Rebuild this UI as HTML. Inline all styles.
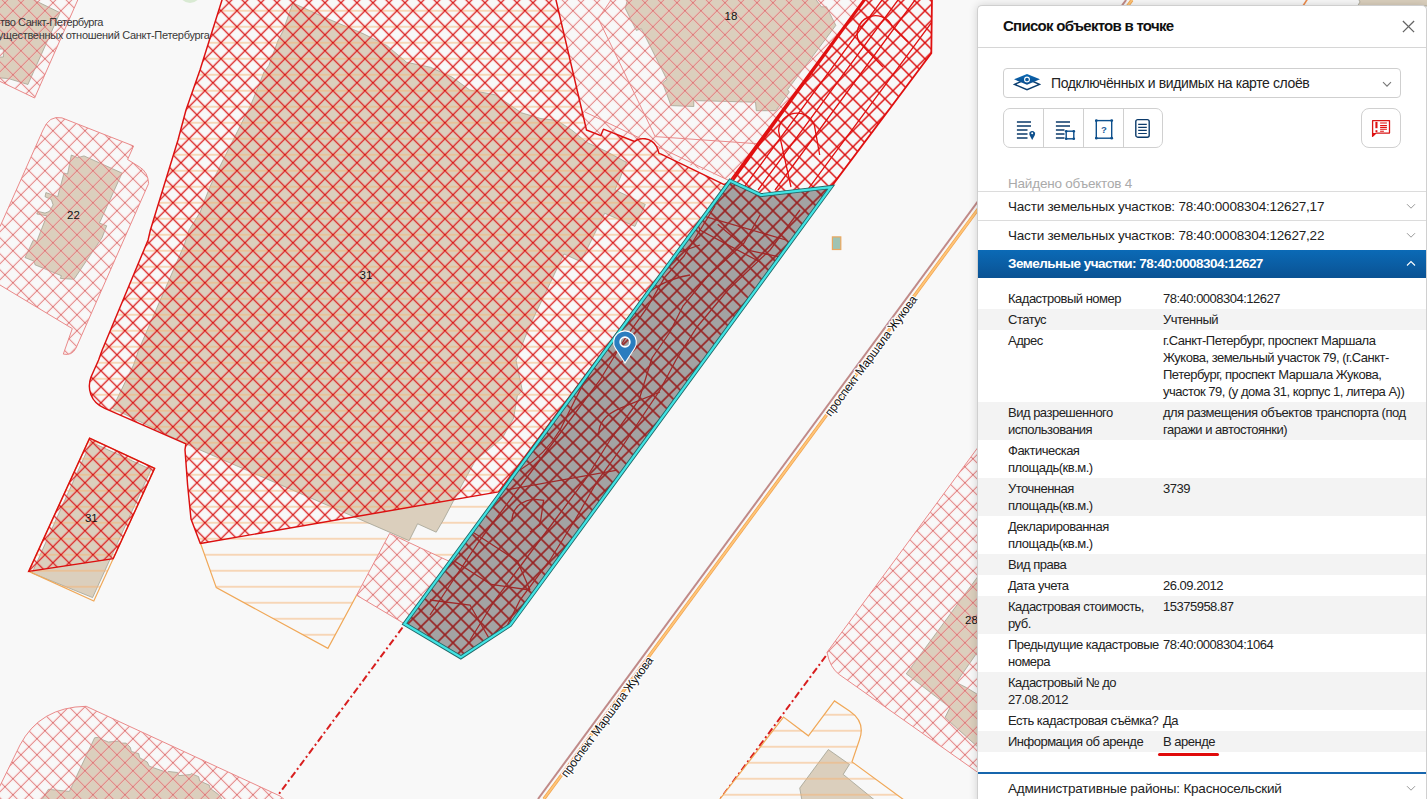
<!DOCTYPE html>
<html><head><meta charset="utf-8">
<style>
*{margin:0;padding:0;box-sizing:border-box}
html,body{width:1427px;height:799px;overflow:hidden;background:#f8f8f8;font-family:"Liberation Sans",sans-serif}
#map{position:absolute;left:0;top:0;width:1427px;height:799px}
#panel{position:absolute;left:977px;top:5px;width:450px;height:800px;background:#fff;border:1px solid #cfcfcf;border-right:1px solid #d0d0d0;border-radius:5px 5px 0 0;box-shadow:0 0 9px rgba(0,0,0,0.16);overflow:hidden;color:#222}
.abs{position:absolute;white-space:nowrap}
.row{position:relative;width:450px;font-size:13px;letter-spacing:-0.5px;line-height:17px;color:#222}
.lab{position:absolute;left:30px;top:2px}
.val{position:absolute;left:185px;top:2px}
</style></head><body>
<svg id="map" width="1427" height="799" viewBox="0 0 1427 799">
<defs>
<pattern id="hr" patternUnits="userSpaceOnUse" x="4.95" y="2.75" width="16" height="16">
<path d="M-8,-8L24,24M8,-8L24,8M-8,8L8,24M24,-8L-8,24M8,-8L-8,8M24,8L8,24" stroke="#ff8a8a" stroke-opacity="0.35" stroke-width="2.5" fill="none"/><path d="M-8,-8L24,24M8,-8L24,8M-8,8L8,24M24,-8L-8,24M8,-8L-8,8M24,8L8,24" stroke="#d41515" stroke-width="1.05" fill="none"/>
</pattern>
<pattern id="hp" patternUnits="userSpaceOnUse" x="4.95" y="2.75" width="16" height="16">
<path d="M-8,-8L24,24M8,-8L24,8M-8,8L8,24M24,-8L-8,24M8,-8L-8,8M24,8L8,24" stroke="#ffb0b0" stroke-opacity="0.3" stroke-width="2.4" fill="none"/><path d="M-8,-8L24,24M8,-8L24,8M-8,8L8,24M24,-8L-8,24M8,-8L-8,8M24,8L8,24" stroke="#dc7a7a" stroke-width="1" fill="none"/>
</pattern>
<pattern id="hn" patternUnits="userSpaceOnUse" x="4.95" y="2.75" width="16" height="16">
<path d="M-8,-8L24,24M8,-8L24,8M-8,8L8,24M24,-8L-8,24M8,-8L-8,8M24,8L8,24" stroke="#dc0e0e" stroke-width="1.45" fill="none"/>
</pattern>
<pattern id="hd" patternUnits="userSpaceOnUse" x="4.95" y="2.75" width="16" height="16">
<path d="M-8,-8L24,24M8,-8L24,8M-8,8L8,24M24,-8L-8,24M8,-8L-8,8M24,8L8,24" stroke="#982222" stroke-width="1.6" fill="none"/>
</pattern>
<pattern id="ho" patternUnits="userSpaceOnUse" x="0" y="0" width="16" height="16">
<rect x="0" y="9.8" width="16" height="1.9" fill="#f6b474" fill-opacity="0.5"/>
</pattern>
</defs>
<rect width="1427" height="799" fill="#f8f8f8"/>
<!-- green circle top -->
<circle cx="190" cy="-8" r="11" fill="#d9ead3"/>

<!-- roads -->
<line x1="538" y1="799" x2="1126.1" y2="0" stroke="#c08a88" stroke-width="2"/>
<line x1="543.9" y1="799" x2="1132" y2="0" stroke="#f0a24e" stroke-width="3.2"/><line x1="543.9" y1="799" x2="1132" y2="0" stroke="#ffc577" stroke-width="1.8"/>
<!-- dash-dot -->
<path d="M402.5,627.5L274.5,800M825.8,656L719.5,800" stroke="#d81e1e" stroke-width="2" stroke-dasharray="7,3,2,3" fill="none"/>

<!-- TOP-LEFT pink parcel -->
<path id="tl" d="M-5,-4L79.5,-4L34.6,98L-5,79Z" fill="#f8f8f8"/>
<path d="M28,-3L60,12.7L27.9,84.5L8.5,78.6L-3,77.7L-3,57L3.4,57L3.4,49L-3,49L-3,-3Z" fill="#dbcfbd" stroke="#9a9a8a" stroke-width="0.7"/>
<path d="M-5,-4L79.5,-4L34.6,98L-5,79Z" fill="url(#hp)" stroke="#ea8a8a" stroke-width="1"/>

<!-- Parcel 22 -->
<path d="M0,226.6L43,130Q49,115 62,117.9L133.6,146L127.6,159.5L139.6,167Q148,172 148.6,183.5L76,348.1Q72,356 63.3,354.1L72.3,328.6L40,309.1L0,285Z" fill="#f8f8f8"/>
<path d="M71.3,155L77.6,157.7L84,155.9L122.1,173.1L99.4,223.1L106.7,225.8L102.1,237.6L74,279.3L60.4,278.4L61.3,275.7L35,264.8L34.1,261.2L25,257.6L33.2,240.3L36.8,241.2L46.8,215.8L36.8,214L37.7,211.3L45,213.1L49.5,211.3L53.1,204.9L51.3,199.5L45,196.7L45.9,192.6L57.7,196.7L64,173.1L67.6,174Z" fill="#dbcfbd" stroke="#9a9a8a" stroke-width="0.7"/>
<path d="M0,226.6L43,130Q49,115 62,117.9L133.6,146L127.6,159.5L139.6,167Q148,172 148.6,183.5L76,348.1Q72,356 63.3,354.1L72.3,328.6L40,309.1L-5,282L-5,226Z" fill="url(#hp)" stroke="#ea8a8a" stroke-width="1"/>

<!-- Bottom-left pink parcel -->
<path d="M-5,806L-5,796L20,745Q40,707 86.2,706.3L280,796L292,806Z" fill="#f8f8f8"/>
<path d="M94.6,737.8L98.8,737.2L103,739.9L108.3,742L119.8,741L120.9,743.1L126.1,743.1L130.3,747.3L131.4,751.5L138.7,753.6L139.8,757.8L147.2,762L149.3,766.2L167.1,772.5L168.2,771.4L177.6,772.5L178.7,775.6L190.2,774.6L191.3,773.5L198.7,776.7L199.7,780.9L209.2,785.1L210.2,788.3L218.6,794.6L222,799L225,806L38,806L48.4,789.3L69.4,791.4Z" fill="#dbcfbd" stroke="#9a9a8a" stroke-width="0.7"/>
<path d="M-5,806L-5,796L20,745Q40,707 86.2,706.3L280,796L292,806Z" fill="url(#hp)" stroke="#ea8a8a" stroke-width="1"/>

<!-- Parcel 28 right -->
<path d="M990,431L827,652.3Q830,668 839.5,674.7L990,781Z" fill="#f8f8f8"/>
<path d="M990,560L906.3,673.8L950,707.5L945,717.5L990,758L990,702L966.3,687.5L956.3,682.5L990,634Z" fill="#dbcfbd" stroke="#9a9a8a" stroke-width="0.7"/>
<path d="M990,431L827,652.3Q830,668 839.5,674.7L990,781Z" fill="url(#hp)" stroke="#ea8a8a" stroke-width="1"/>

<!-- Orange parcel bottom right -->
<path d="M713,808L783.5,717.1L808.4,735.8L834.5,700.9L849.5,710.9Q866,722 859.4,740L852,761.9L915,808Z" fill="#f8f8f8"/>
<path d="M828.3,749.5L849.5,764.4L843.2,774.4L882,806L803,806L799.7,788.1Z" fill="#dbcfbd" stroke="#9a9a8a" stroke-width="0.7"/>
<path d="M713,808L783.5,717.1L808.4,735.8L834.5,700.9L849.5,710.9Q866,722 859.4,740L852,761.9L915,808Z" fill="url(#ho)" stroke="#f0a858" stroke-width="1.2"/>

<!-- P18 pink zone -->
<path d="M555,-4L556,0L586.5,130L600.8,135.6L603.4,129.2L634.6,141.5C639,137.5 651,136.5 656.8,147L659.1,153.4L661.2,154.1L730.1,180.8L863.6,0L866.5,-4L555,-4Z" fill="#f8f8f8"/>
<path d="M628,-3L625.3,8.5L636.3,30.4L641.4,28.7L666.8,79.4L662.5,82.8L671,105.6L693.8,106.5L693.8,100.6L755.5,102.2L756.3,110.7L775.8,110.7L789.3,92.1L787.6,89.6L835.8,25.4L826.5,6.8L821.4,6.8L814,-3Z" fill="#dbcfbd" stroke="#9a9a8a" stroke-width="0.7"/>
<path d="M555,-4L556,0L586.5,130L600.8,135.6L603.4,129.2L634.6,141.5C639,137.5 651,136.5 656.8,147L659.1,153.4L661.2,154.1L730.1,180.8L863.6,0L866.5,-4L555,-4Z" fill="url(#hp)"/>
<path d="M611,0L598.3,18.6L655.2,136.6L756.8,143.7M585,112L732,182" stroke="#ea8a8a" stroke-width="1" fill="none"/>

<!-- Pink P2 -->
<path d="M389.6,533.5L470,571L404.5,623.8L356.6,595.2Z" fill="#f8f8f8"/>

<!-- Orange O1 -->
<path d="M200.3,542.8L216.3,587.6L327.9,648.4L356.6,595.2L389.6,533.5L470,571L498.5,491.9Z" fill="url(#ho)"/>
<path d="M200.3,542.8L216.3,587.6L327.9,648.4L356.6,595.2" stroke="#f0a858" stroke-width="1.2" fill="none"/>

<!-- R1 big red zone -->
<path id="r1" d="M223,-4L222,0L200,70L186,110L178,140L150.4,230L148.1,240L102.2,350L98.6,360L91,377C87,388 90,402 104.8,408.3L185.9,443.8L185,449.7L187.6,485L191,519L200.3,543.5L498.5,491.9L730.1,180.8L724.2,184.6L661.2,154.1L659.1,153.4L656.8,147C651,136.5 639,137.5 634.6,141.5L603.4,129.2L600.8,135.6L586.5,130L556,0L555,-4Z" fill="#f8f8f8"/>
<!-- big beige building -->
<path d="M292.9,3L325.5,17.8L363,33.6L386.8,45.5L406.6,62.3L430.3,67.2L452,77.1L469.8,90L495.5,94.9L521.2,112.7L541,118.6L557,120.4L571.7,130L586.8,142.4L606.1,151.3L626.7,162.4L615,189.9L645.3,204.4L635,226.4L604.7,213.3L580.8,261.7L564,254L532.5,320L524.9,337.7L516.1,360.5L522.4,390.8L517.3,395.8L513.6,418.3L502.6,437.5L475.1,461L460,488.5L443.4,520L436.2,532.2L417.6,523.8L409.1,540.7L187,444.3L112.4,408.3L133.5,365L138.6,350L184.2,245L189,230L200,212.5L204.7,200L211,184.4L223.4,159.4L237.5,131.3L251.6,103L264,72L268.8,65.6L278,40.6L282.8,31.3Z" fill="#dbcfbd" stroke="#9a9a8a" stroke-width="0.7"/>
<!-- small parcel 31 -->
<path d="M89.6,438.2L154.6,468.3L93.8,601L28.7,571.4Z" fill="#f8f8f8"/>
<path d="M91,442L151,469.5L92.6,597.6L32,573Z" fill="#dbcfbd" stroke="#9a9a8a" stroke-width="0.7"/>
<path d="M89.6,438.2L154.6,468.3L93.8,601L28.7,571.4Z" fill="url(#ho)" stroke="#f0a858" stroke-width="1.2"/>
<path d="M89.6,438.2L154.6,468.3L113.2,558.7L28.7,571.4Z" fill="url(#hr)" stroke="#dc1010" stroke-width="1.45"/>
<!-- pink P2 hatch (on top of orange) -->
<path d="M389.6,533.5L470,571L404.5,623.8L356.6,595.2Z" fill="url(#hp)" stroke="#ea8a8a" stroke-width="1"/>
<!-- orange stripes over R1 + red hatch -->
<path d="M223,-4L222,0L200,70L186,110L178,140L150.4,230L148.1,240L102.2,350L98.6,360L91,377C87,388 90,402 104.8,408.3L185.9,443.8L185,449.7L187.6,485L191,519L200.3,543.5L498.5,491.9L730.1,180.8L724.2,184.6L661.2,154.1L659.1,153.4L656.8,147C651,136.5 639,137.5 634.6,141.5L603.4,129.2L600.8,135.6L586.5,130L556,0L555,-4Z" fill="url(#ho)"/>
<path d="M223,-4L222,0L200,70L186,110L178,140L150.4,230L148.1,240L102.2,350L98.6,360L91,377C87,388 90,402 104.8,408.3L185.9,443.8L185,449.7L187.6,485L191,519L200.3,543.5L498.5,491.9L730.1,180.8L724.2,184.6L661.2,154.1L659.1,153.4L656.8,147C651,136.5 639,137.5 634.6,141.5L603.4,129.2L600.8,135.6L586.5,130L556,0L555,-4Z" fill="url(#hr)" stroke="#dc1010" stroke-width="1.45" stroke-linejoin="round"/>

<!-- NE strip -->
<path d="M866.5,-4L932,-4L931.3,53.2L831,187.1L760.9,195.1L730.1,180.8Z" fill="#f8f8f8"/>
<path d="M866.5,-4L932,-4L931.3,53.2L831,187.1L760.9,195.1L730.1,180.8Z" fill="url(#hn)" stroke="#e01010" stroke-width="1.8"/>
<clipPath id="cne"><path d="M866.5,-4L932,-4L931.3,53.2L831,187.1L760.9,195.1L730.1,180.8Z"/></clipPath>
<g clip-path="url(#cne)" stroke="#e01010" fill="none">
<path d="M882,0L742,190M898,0L758,190M915,0L775,190M932,22L800,200" stroke-width="1.3"/>
<path d="M866,-2L733,180" stroke-width="2.6"/>
<path d="M859,42A18,18 0 1 1 892,26L908,42M859,42L883,67" stroke-width="1.4"/>
<path d="M778.6,131A18.5,18.5 0 0 1 814.3,124.8L819.7,155M778.6,131L791,187" stroke-width="1.3"/>
</g>
<!-- small rect -->
<rect x="832.4" y="236.9" width="8.4" height="12.6" fill="#9fc3b3" stroke="#eaa860" stroke-width="1.2"/>

<!-- Teal strip -->
<path id="ts" d="M730.1,180.8L760.9,195.1L831,187.1L510.1,625.1L460.8,657.3L404.5,623.8Z" fill="#a3a3a3"/>
<path d="M730.1,180.8L760.9,195.1L831,187.1L510.1,625.1L460.8,657.3L404.5,623.8Z" fill="url(#hd)"/>
<clipPath id="cts"><path d="M730.1,180.8L760.9,195.1L831,187.1L510.1,625.1L460.8,657.3L404.5,623.8Z"/></clipPath>
<g clip-path="url(#cts)" stroke="#a02828" stroke-width="1.3" fill="none">
<path d="M704.6,216.3L786,240M717.7,224.2L749,250.5L786,258.3M690,205L700,230L760,262"/>
<path d="M715,206L684,256L665,277L647,308L626,337L600,380L570,420L540,460L510,500L480,540L450,585L430,615"/>
<path d="M760,215L744,243L707,277L683,306L670,332L652,358L639,400L610,440L585,480L555,520L525,560L495,600L470,640"/>
<path d="M800,210L770,250L728,290L697,327L676,360L660,390L640,420L620,450L598,480L575,520L550,560L520,600L500,640"/>
<path d="M506.8,489.9L617.2,470.2M598.8,434.7Q598,418 619.8,408.4L660,392"/>
<path d="M512,521.4Q512,503 533,499.1L543.6,500.4L540,525L530,532M472.6,532L517.3,560.9L530,590M454.2,560.9L491,584.5L530,590"/>
<path d="M520,470Q545,455 560,430L575,400Q590,370 600,360M560,300Q600,320 610,330L640,300Q660,280 690,275"/>
<path d="M430,600L470,605L490,640M440,575L455,545L470,520M610,250L650,262L700,245"/>
</g>
<path d="M730.1,180.8L760.9,195.1L831,187.1L510.1,625.1L460.8,657.3L404.5,623.8Z" fill="none" stroke="#226a6a" stroke-width="4" stroke-linejoin="miter"/>
<path d="M730.1,180.8L760.9,195.1L831,187.1L510.1,625.1L460.8,657.3L404.5,623.8Z" fill="none" stroke="#42e4e4" stroke-width="2.2" stroke-linejoin="miter"/>

<!-- Labels -->
<g font-family="Liberation Sans" font-size="11.5" fill="#111">
<text x="731" y="19.5" text-anchor="middle">18</text>
<text x="73.5" y="219" text-anchor="middle">22</text>
<text x="366" y="279" text-anchor="middle">31</text>
<text x="91.3" y="521.5" text-anchor="middle">31</text>
<text x="971.5" y="624" text-anchor="middle">28</text>
</g>
<g font-family="Liberation Sans" font-size="11" fill="#383838">
<text x="103" y="26.2" text-anchor="end" letter-spacing="-0.45">тво Санкт-Петербурга</text>
<text x="209.6" y="39.2" text-anchor="end" letter-spacing="-0.3">ущественных отношений Санкт-Петербурга</text>
</g>
<g font-family="Liberation Sans" font-size="12" letter-spacing="-0.25" fill="#111" stroke="#fff" stroke-width="2.2" paint-order="stroke" stroke-linejoin="round">
<text transform="translate(607,717) rotate(-53.6)" text-anchor="middle" dy="4">проспект Маршала Жукова</text>
<text transform="translate(871,356) rotate(-53.6)" text-anchor="middle" dy="4">проспект Маршала Жукова</text>
</g>

<!-- pin -->
<g>

<path d="M625,364L615.1,348.8A11.9,11.9 0 1 1 634.9,348.8ZM625,346.2A4.2,4.2 0 1 0 625,337.8A4.2,4.2 0 1 0 625,346.2Z" fill="#fff" fill-rule="evenodd"/>
<path d="M625,361.9L615.9,348A10.8,10.8 0 1 1 634.1,348ZM625,346.2A4.2,4.2 0 1 0 625,337.8A4.2,4.2 0 1 0 625,346.2Z" fill="#2a7dbf" fill-rule="evenodd"/>
<circle cx="625" cy="342" r="4.9" fill="none" stroke="#fff" stroke-width="1.6"/>
</g>
<!-- top-right bits above panel -->
<path d="M1358,-2L1360,2L1357.5,6L1430,6L1430,-2Z" fill="#dacfbd" stroke="#9a9a8a" stroke-width="0.7"/>
<path d="M1307.5,-1L1303,6" stroke="#ec8a4a" stroke-width="1.6"/>
</svg>

<div id="panel">
<div class="abs" style="left:25px;top:11px;font-size:15px;font-weight:bold;letter-spacing:-0.72px;color:#111">Список объектов в точке</div>
<svg class="abs" style="left:424px;top:14px" width="13" height="13" viewBox="0 0 13 13"><path d="M0.9,1L12.1,12.1M12.1,1L0.9,12.1" stroke="#666" stroke-width="1.3"/></svg>
<div class="abs" style="left:0;top:41px;width:450px;height:1px;background:#d6d6d6"></div>
<div class="abs" style="left:25px;top:62px;width:398px;height:30px;border:1px solid #cfcfcf;border-radius:4px"></div>
<svg class="abs" style="left:35px;top:67px" width="28" height="18" viewBox="1013 73 28 18">
<defs><linearGradient id="lg" x1="0" y1="0" x2="0" y2="1"><stop offset="0" stop-color="#0b6ab5"/><stop offset="1" stop-color="#0a4a8a"/></linearGradient></defs>
<path d="M1014.6,84.4L1027,78.9L1039.4,84.4L1027,89.6Z" fill="none" stroke="#0b3d6e" stroke-width="1.5" stroke-linejoin="miter"/>
<path d="M1014,79.3L1027,73.9L1040,79.3L1027,84.8Z" fill="url(#lg)"/>
<circle cx="1027" cy="79.5" r="2.4" fill="#0b5a9e" stroke="#fff" stroke-width="1.1"/>
</svg>
<div class="abs" style="left:73px;top:69px;font-size:14px;letter-spacing:-0.39px;color:#222">Подключённых и видимых на карте слоёв</div>
<svg class="abs" style="left:404px;top:75px" width="10" height="7" viewBox="0 0 10 7"><path d="M1,1.2L5,5.2L9,1.2" stroke="#777" stroke-width="1.1" fill="none"/></svg>
<div class="abs" style="left:25px;top:102px;width:160px;height:40px;border:1px solid #d0d0d0;border-radius:7px"></div>
<div class="abs" style="left:65px;top:103px;width:1px;height:38px;background:#d0d0d0"></div>
<div class="abs" style="left:105px;top:103px;width:1px;height:38px;background:#d0d0d0"></div>
<div class="abs" style="left:145px;top:103px;width:1px;height:38px;background:#d0d0d0"></div>
<svg class="abs" style="left:38px;top:115px" width="22" height="22" viewBox="0 0 22 22">
<path d="M0.9,1H15M0.9,5H15M0.9,9H11.5M0.9,13H11.5M0.9,17H11.5" stroke="#0b3a6a" stroke-width="1.6"/>
<path d="M16.2,19L13.5,14A2.9,2.9 0 1 1 18.9,14Z" fill="#0d4f8c"/><circle cx="16.2" cy="12.3" r="1" fill="#fff"/>
</svg>
<svg class="abs" style="left:77px;top:115px" width="22" height="22" viewBox="0 0 22 22">
<path d="M0.9,1H15M0.9,5H15M0.9,9H9.5M0.9,13H9.5M0.9,17H9.5" stroke="#0b3a6a" stroke-width="1.6"/>
<rect x="11.2" y="10.2" width="7.6" height="7.6" fill="none" stroke="#0d4f8c" stroke-width="1.4"/>
<circle cx="11.2" cy="10.2" r="1.3" fill="#0d4f8c"/><circle cx="18.8" cy="10.2" r="1.3" fill="#0d4f8c"/><circle cx="11.2" cy="17.8" r="1.3" fill="#0d4f8c"/><circle cx="18.8" cy="17.8" r="1.3" fill="#0d4f8c"/>
</svg>
<svg class="abs" style="left:117px;top:113px" width="22" height="22" viewBox="0 0 22 22">
<rect x="1.3" y="1.6" width="15.4" height="17.6" fill="none" stroke="#0d4f8c" stroke-width="1.4"/>
<circle cx="1.3" cy="1.6" r="1.4" fill="#0d4f8c"/><circle cx="16.7" cy="1.6" r="1.4" fill="#0d4f8c"/><circle cx="1.3" cy="19.2" r="1.4" fill="#0d4f8c"/><circle cx="16.7" cy="19.2" r="1.4" fill="#0d4f8c"/>
<text x="9" y="14" font-family="Liberation Sans" font-size="9.5" font-weight="bold" fill="#1a5a9a" text-anchor="middle">?</text>
</svg>
<svg class="abs" style="left:157px;top:112px" width="22" height="22" viewBox="0 0 22 22">
<rect x="0.8" y="1.6" width="13.4" height="17.6" rx="2" fill="none" stroke="#0b3a6a" stroke-width="1.4"/>
<path d="M3.2,6.4H11.8M3.2,9.4H11.8M3.2,12.4H11.8M3.2,15.5H11.8" stroke="#0b3a6a" stroke-width="1.1"/>
</svg>
<div class="abs" style="left:383px;top:102px;width:40px;height:40px;border:1px solid #d0d0d0;border-radius:8px"></div>
<svg class="abs" style="left:393px;top:113px" width="22" height="22" viewBox="1371 119 22 22">
<path d="M1372.6,120.6H1389.5V133.1H1376L1372.6,136.4Z" fill="none" stroke="#d81616" stroke-width="1.3" stroke-linejoin="round"/>
<path d="M1372.2,133L1372.2,136.6L1376,133Z" fill="#e01010"/>
<rect x="1375.4" y="121.9" width="2.1" height="6.3" fill="#e01010"/><rect x="1375.5" y="130.2" width="1.9" height="1.9" fill="#e01010"/>
<path d="M1380.1,123H1386.9M1380.1,125.5H1386.9M1380.1,127.4H1386.9M1380.1,129.3H1386.9M1380.1,131.2H1383.9" stroke="#e01010" stroke-width="1.1"/>
</svg>
<div class="abs" style="left:30px;top:170px;font-size:13.5px;letter-spacing:-0.2px;color:#aaa">Найдено объектов 4</div>
<div class="abs" style="left:0;top:185px;width:450px;height:1px;background:#dcdcdc"></div>
<div class="abs" style="left:30px;top:193px;font-size:13.5px;letter-spacing:-0.2px;color:#222">Части земельных участков: 78:40:0008304:12627,17</div>
<svg class="abs" style="left:428px;top:197px" width="10" height="7" viewBox="0 0 10 7"><path d="M1,1.2L5,5.2L9,1.2" stroke="#999" stroke-width="1" fill="none"/></svg>
<div class="abs" style="left:0;top:214px;width:450px;height:1px;background:#dcdcdc"></div>
<div class="abs" style="left:30px;top:222px;font-size:13.5px;letter-spacing:-0.2px;color:#222">Части земельных участков: 78:40:0008304:12627,22</div>
<svg class="abs" style="left:428px;top:226px" width="10" height="7" viewBox="0 0 10 7"><path d="M1,1.2L5,5.2L9,1.2" stroke="#999" stroke-width="1" fill="none"/></svg>
<div class="abs" style="left:0;top:244px;width:450px;height:28px;background:linear-gradient(#0b6ab6,#0a5293)"></div>
<div class="abs" style="left:30px;top:250px;font-size:13.5px;font-weight:bold;letter-spacing:-0.53px;color:#fff">Земельные участки: 78:40:0008304:12627</div>
<svg class="abs" style="left:428px;top:254px" width="10" height="7" viewBox="0 0 10 7"><path d="M1,5.5L5,1.5L9,5.5" stroke="#fff" stroke-width="1.1" fill="none"/></svg>
<div id="tbl" class="abs" style="left:0;top:282px;width:450px"><div class="row" style="height:21px;background:#fff"><div class="lab">Кадастровый номер</div><div class="val">78:40:0008304:12627</div></div><div class="row" style="height:21px;background:#f3f3f3"><div class="lab">Статус</div><div class="val">Учтенный</div></div><div class="row" style="height:72px;background:#fff"><div class="lab">Адрес</div><div class="val">г.Санкт-Петербург, проспект Маршала<br>Жукова, земельный участок 79, (г.Санкт-<br>Петербург, проспект Маршала Жукова,<br>участок 79, (у дома 31, корпус 1, литера А))</div></div><div class="row" style="height:38px;background:#f3f3f3"><div class="lab">Вид разрешенного<br>использования</div><div class="val">для размещения объектов транспорта (под<br>гаражи и автостоянки)</div></div><div class="row" style="height:38px;background:#fff"><div class="lab">Фактическая<br>площадь(кв.м.)</div><div class="val"></div></div><div class="row" style="height:38px;background:#f3f3f3"><div class="lab">Уточненная<br>площадь(кв.м.)</div><div class="val">3739</div></div><div class="row" style="height:38px;background:#fff"><div class="lab">Декларированная<br>площадь(кв.м.)</div><div class="val"></div></div><div class="row" style="height:21px;background:#f3f3f3"><div class="lab">Вид права</div><div class="val"></div></div><div class="row" style="height:21px;background:#fff"><div class="lab">Дата учета</div><div class="val">26.09.2012</div></div><div class="row" style="height:38px;background:#f3f3f3"><div class="lab">Кадастровая стоимость,<br>руб.</div><div class="val">15375958.87</div></div><div class="row" style="height:38px;background:#fff"><div class="lab">Предыдущие кадастровые<br>номера</div><div class="val">78:40:0008304:1064</div></div><div class="row" style="height:38px;background:#f3f3f3"><div class="lab">Кадастровый № до<br>27.08.2012</div><div class="val"></div></div><div class="row" style="height:21px;background:#fff"><div class="lab">Есть кадастровая съёмка?</div><div class="val">Да</div></div><div class="row" style="height:21px;background:#f3f3f3"><div class="lab">Информация об аренде</div><div class="val">В аренде</div></div></div><div class="abs" style="left:180px;top:747px;width:61px;height:3px;border-radius:2px;background:#e00a0a"></div>
<div class="abs" style="left:0;top:766px;width:450px;height:2px;background:#1766ad"></div>
<div class="abs" style="left:30px;top:775px;font-size:13.5px;letter-spacing:-0.2px;color:#222">Административные районы: Красносельский</div>
<svg class="abs" style="left:428px;top:779px" width="10" height="7" viewBox="0 0 10 7"><path d="M1,1.2L5,5.2L9,1.2" stroke="#999" stroke-width="1" fill="none"/></svg>
</div>
</body></html>
